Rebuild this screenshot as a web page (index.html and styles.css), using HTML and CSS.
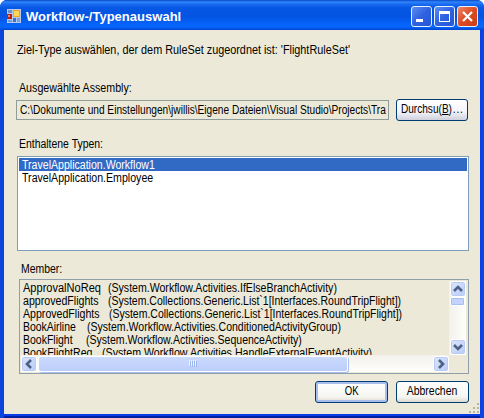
FILE: index.html
```html
<!DOCTYPE html>
<html lang="de">
<head>
<meta charset="utf-8">
<title>Workflow-/Typenauswahl</title>
<link rel="stylesheet" href="styles.css">
</head>
<body>
<div class="window">
  <header class="titlebar">
    <svg class="app-icon" width="14" height="14" viewBox="0 0 14 14" shape-rendering="crispEdges">
      <rect width="14" height="14" fill="#b9c9e8"/>
      <rect x="1" y="1" width="4" height="3" fill="#6d8fca"/>
      <rect x="6" y="1" width="7" height="7" fill="#e9a820"/>
      <rect x="7" y="2" width="5" height="5" fill="#ffd65c"/>
      <rect x="0" y="5" width="5" height="5" fill="#b51f14"/>
      <rect x="1" y="6" width="2" height="2" fill="#f08068"/>
      <rect x="1" y="11" width="4" height="2" fill="#6d9ae0"/>
      <rect x="6" y="9" width="3" height="4" fill="#3f70cc"/>
      <rect x="10" y="9" width="3" height="4" fill="#7ba2e0"/>
    </svg>
    <h1 class="title">Workflow-/Typenauswahl</h1>
    <div class="controls">
      <span class="control"><svg width="19" height="19"><path d="M4 13.500h7" stroke="#fff" stroke-width="3"/></svg></span>
      <span class="control"><svg width="19" height="19"><path d="M4.500 5v10M14.500 5v10M4 14.500h11" stroke="#fff"/><path d="M4 5.500h11" stroke="#fff" stroke-width="3"/></svg></span>
      <span class="control close"><svg width="19" height="19"><path d="M5 5l9 9M14 5l-9 9" stroke="#fff" stroke-width="2.200"/></svg></span>
    </div>
  </header>
  <main class="client">
    <p class="intro"><span class="fit fit-intro">Ziel-Type auswählen, der dem RuleSet zugeordnet ist: 'FlightRuleSet'</span></p>
    <p class="label label-assembly"><span class="fit fit-label-a">Ausgewählte Assembly:</span></p>
    <div class="assembly-row">
      <div class="path"><span class="fit fit-path">C:\Dokumente und Einstellungen\jwillis\Eigene Dateien\Visual Studio\Projects\Tra</span></div>
      <div class="button browse"><span class="fit fit-browse">Durchsu(<u>B</u>)<span class="dots">...</span></span></div>
    </div>
    <p class="label label-types"><span class="fit fit-label-b">Enthaltene Typen:</span></p>
    <ul class="types">
      <li class="selected"><span class="fit t1">TravelApplication.Workflow1</span></li>
      <li><span class="fit t2">TravelApplication.Employee</span></li>
    </ul>
    <p class="label label-member"><span class="fit fit-label-b">Member:</span></p>
    <div class="members">
      <ul class="member-list">
        <li><span class="fit n1">ApprovalNoReq</span><span class="fit d1">(System.Workflow.Activities.IfElseBranchActivity)</span></li>
        <li><span class="fit n2">approvedFlights</span><span class="fit d2">(System.Collections.Generic.List`1[Interfaces.RoundTripFlight])</span></li>
        <li><span class="fit n3">ApprovedFlights</span><span class="fit d3">(System.Collections.Generic.List`1[Interfaces.RoundTripFlight])</span></li>
        <li><span class="fit n4">BookAirline</span><span class="fit d4">(System.Workflow.Activities.ConditionedActivityGroup)</span></li>
        <li><span class="fit n5">BookFlight</span><span class="fit d5">(System.Workflow.Activities.SequenceActivity)</span></li>
        <li><span class="fit n6">BookFlightReq</span><span class="fit d6">(System.Workflow.Activities.HandleExternalEventActivity)</span></li>
      </ul>
      <div class="vscroll">
        <span class="arrow"><svg width="14" height="14"><path d="M3 9L7 5l4 4" fill="none" stroke="#4d6185" stroke-width="2.600"/></svg></span>
        <span class="vthumb"></span>
        <span class="arrow down"><svg width="14" height="14"><path d="M3 5l4 4 4-4" fill="none" stroke="#4d6185" stroke-width="2.600"/></svg></span>
      </div>
      <div class="hscroll">
        <span class="arrow"><svg width="14" height="14"><path d="M9 3L5 7l4 4" fill="none" stroke="#4d6185" stroke-width="2.600"/></svg></span>
        <span class="hthumb"><svg width="8" height="7" shape-rendering="crispEdges"><path d="M.5 0v6M2.500 0v6M4.500 0v6M6.500 0v6" stroke="#eef4fe"/><path d="M1.500 1v6M3.500 1v6M5.500 1v6M7.500 1v6" stroke="#9cb5ee"/></svg></span>
        <span class="arrow right"><svg width="14" height="14"><path d="M5 3l4 4-4 4" fill="none" stroke="#4d6185" stroke-width="2.600"/></svg></span>
      </div>
    </div>
    <div class="actions">
      <div class="button ok"><span class="fit fit-ok">OK</span></div>
      <div class="button cancel"><span class="fit fit-cancel">Abbrechen</span></div>
    </div>
    <svg class="grip" width="12" height="12" shape-rendering="crispEdges"><path d="M9 1h2v2h-2zM5 5h2v2h-2zM9 5h2v2h-2zM1 9h2v2h-2zM5 9h2v2h-2zM9 9h2v2h-2z" fill="#b8b4a2"/></svg>
  </main>
</div>
</body>
</html>
```
FILE: styles.css
```css
* { box-sizing: border-box; margin: 0; padding: 0; }
body {
  width: 484px; height: 418px; overflow: hidden; background: #fff;
  font: 12px/13px "Liberation Sans", Arial, sans-serif; color: #000;
}
.window {
  width: 484px; height: 418px; display: flex; flex-direction: column;
  background: #0a46dc; border-radius: 7px 7px 0 0; overflow: hidden;
}
.titlebar {
  height: 30px; flex: none; display: flex; align-items: center; padding: 3px 6px 0 7px;
  background: linear-gradient(#0a48c8 0, #2e86fb 2px, #1a6cf2 4px, #0557e4 8px, #0454e2 17px, #0564fa 24px, #0566fe 27px, #0144cc 30px);
}
.app-icon { margin-right: 5px; margin-top: -1px; }
.title {
  font: bold 13px/16px "Liberation Sans", Arial, sans-serif; letter-spacing: .02px;
  color: #fff; white-space: nowrap; flex: 1; padding-top: 1px;
}
.controls { display: flex; gap: 2px; }
.control {
  width: 21px; height: 21px; border: 1px solid #e8f0ff; border-radius: 3px;
  background: linear-gradient(135deg, #5b8df4, #2f62e0 50%, #2458d8);
}
.control svg, .arrow svg { display: block; }
.close { background: linear-gradient(135deg, #ee8767, #dc4a22 50%, #cb3d14); }
.client {
  height: 384px; margin: 0 4px; background: #ece9d8; position: relative;
  box-shadow: -1px 0 #0a3ce8, 1px 0 #0a3ce8, 0 2px #0a3ce8, 0 4px #0020a0;
  white-space: nowrap; padding: 14px 11px 0 12px;
}

/* Condensed text runs */
.fit { display: block; transform-origin: 0 0; width: max-content; transform: scaleX(.88); }
.fit-intro { transform: scaleX(.903); }
.fit-label-a { transform: scaleX(.89); }
.fit-label-b { transform: scaleX(.87); }
.fit-path { transform: scaleX(.845); }
.t1 { transform: scaleX(.881); }
.t2 { transform: scaleX(.885); }
.n1 { width: 85px; transform: scaleX(.92); }
.n2 { width: 85px; transform: scaleX(.885); }
.n3 { width: 86px; transform: scaleX(.883); }
.n4 { width: 64px; transform: scaleX(.87); }
.n5 { width: 63px; transform: scaleX(.875); }
.n6 { width: 79px; transform: scaleX(.883); }
.d1 { transform: scaleX(.881); }
.d2, .d3 { transform: scaleX(.873); }
.d4, .d5 { transform: scaleX(.878); }
.d6 { transform: scaleX(.887); }

.intro { margin-left: 1px; height: 13px; }
.label { margin-left: 3px; height: 13px; }
.label-assembly { margin-top: 25px; }
.assembly-row { display: flex; margin-top: 4px; }
.path {
  width: 373px; height: 20px; margin-top: 1px; border: 1px solid #8f9c9c;
  padding: 3px 0 0 3px;
}
.button {
  height: 22px; border: 1px solid #003c74; border-radius: 3px;
  background: linear-gradient(#fff, #f5f5f0 75%, #dcd8cc); padding-top: 3px;
  display: flex; justify-content: center;
}
.button .fit { transform-origin: 50% 0; }
.button .fit-browse { transform: scaleX(.84); }
.dots { letter-spacing: 1px; margin-left: 1px; }
.button .fit-ok { transform: scaleX(.8); }
.button .fit-cancel { transform: scaleX(.87); }
.browse { width: 72px; margin-left: 7px; background: linear-gradient(#fff, #f4f3fa 60%, #d0d0dc); }
.label-types { margin-top: 17px; }
.types {
  list-style: none; margin: 5px 0 0 1px; width: 452px; height: 95px;
  border: 1px solid #7f9db9; background: #fff; padding: 1px;
}
.types li { height: 13px; padding: 1px 0 0 3px; }
.types .selected { background: #316ac5; color: #fff; }
.label-member { margin: 12px 0 0 5px; }
.members {
  margin: 3px 0 0 3px; width: 450px; height: 95px; border: 1px solid #8fa0aa; padding: 1px;
  display: grid; grid-template-columns: 428px 17px; grid-template-rows: 74px 17px;
}
.member-list { list-style: none; overflow: hidden; padding: 1px 0 0 2px; }
.member-list li { height: 13px; display: flex; }
.member-list .fit { flex: none; }
.vscroll { background: linear-gradient(90deg, #f3f1ec, #fefefb); display: flex; flex-direction: column; align-items: center; }
.hscroll { background: linear-gradient(#f3f1ec, #fefefb); display: flex; align-items: center; }
.arrow {
  flex: none; width: 16px; height: 16px; border: 1px solid #fff; border-radius: 3px;
  background: linear-gradient(135deg, #dce6fe, #b8ccf8);
  box-shadow: inset 0 0 0 1px #b9cbf3;
}
.vthumb { width: 15px; height: 9px; border: 1px solid #fff; border-radius: 2px; background: #c3d3fd; box-shadow: inset 0 0 0 1px #a9bff0; }
.down { margin-top: auto; }
.hthumb {
  width: 310px; height: 16px; border: 1px solid #fff; border-radius: 3px; margin-left: 1px;
  background: linear-gradient(#cbdafe, #bccdfa); box-shadow: 1px 1px #a9bff0;
  display: flex; justify-content: center; align-items: center;
}
.right { margin-left: auto; }
.actions { display: flex; justify-content: flex-end; gap: 8px; margin-top: 7px; }
.ok { width: 73px; box-shadow: inset 0 0 0 2px #a6bfee; }
.cancel { width: 73px; }
.grip { position: absolute; right: 0; bottom: 0; }
```
